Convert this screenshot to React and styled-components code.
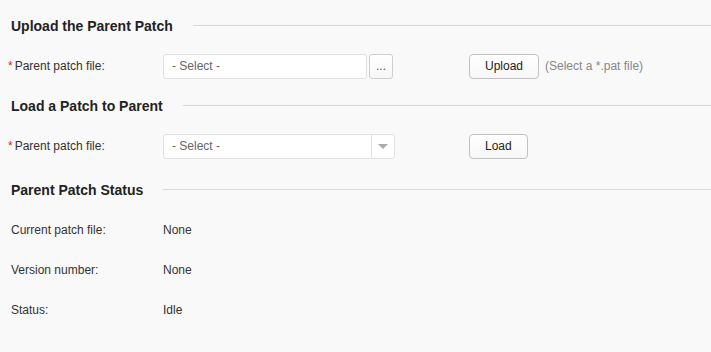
import React from "react";
import styled, { createGlobalStyle } from "styled-components";

const GlobalStyle = createGlobalStyle`
  html, body {
    margin: 0;
    padding: 0;
    background: #f9f9f9;
    font-family: "Liberation Sans", Arial, sans-serif;
    font-size: 12px;
    color: #333;
  }
`;

const Page = styled.div`
  padding-top: 5px;
  width: 711px;
  height: 352px;
  box-sizing: border-box;
  overflow: hidden;
`;

const Heading = styled.div`
  display: flex;
  align-items: center;
  height: 40px;
  padding-left: 11px;
  margin-top: ${p => p.$offset || 0}px;

  h2 {
    margin: 0;
    padding-top: 2px;
    font-size: 14px;
    font-weight: bold;
    color: #222;
    white-space: nowrap;
  }

  &::after {
    content: "";
    flex: 1;
    height: 1px;
    background: #d9d9d9;
    margin-left: 20px;
  }
`;

const Row = styled.div`
  display: grid;
  grid-template-columns: 163px 306px auto;
  align-items: center;
  height: 40px;
  box-sizing: border-box;
  padding-top: 2px;
`;

const Label = styled.div`
  padding-left: ${p => (p.$required ? 8 : 11)}px;
  color: #333;

  .req {
    color: #d9230f;
    margin-right: 2px;
  }
`;

const Field = styled.div`
  display: flex;
  align-items: center;
  gap: 2px;
`;

const Box = styled.div`
  box-sizing: border-box;
  display: flex;
  align-items: center;
  width: ${p => p.$width}px;
  height: 25px;
  background: #fff;
  border: 1px solid #e2e2e2;
  border-radius: 3px;
  color: #666;
`;

const BoxText = styled.span`
  flex: 1;
  padding-left: 8px;
`;

const Arrow = styled.span`
  width: 22px;
  height: 100%;
  border-left: 1px solid #e2e2e2;
  display: flex;
  align-items: center;
  justify-content: center;

  &::before {
    content: "";
    border-left: 5px solid transparent;
    border-right: 5px solid transparent;
    border-top: 5px solid #aaa;
  }
`;

const Button = styled.button`
  box-sizing: border-box;
  height: 25px;
  padding: 0 ${p => p.$pad || 15}px;
  background: linear-gradient(#fff, #f7f7f7);
  border: 1px solid #c2c2c2;
  border-radius: 4px;
  font-family: inherit;
  font-size: 12px;
  color: #222;
  cursor: pointer;
`;

const Dots = styled(Button)`
  width: 24px;
  padding: 0;
  border-color: #cfcfcf;
  border-radius: 3px;
  color: #555;
`;

const Actions = styled.div`
  display: flex;
  align-items: center;
  gap: 6px;
`;

const Hint = styled.span`
  color: #888;
`;

const Value = styled.div`
  color: #333;
`;

const StatusRow = ({ label, value }) => (
  <Row>
    <Label>{label}</Label>
    <Value>{value}</Value>
  </Row>
);

export default function App() {
  return (
    <Page>
      <GlobalStyle />
      <Heading>
        <h2>Upload the Parent Patch</h2>
      </Heading>
      <Row>
        <Label $required>
          <span className="req">*</span>Parent patch file:
        </Label>
        <Field>
          <Box $width={204}>
            <BoxText>- Select -</BoxText>
          </Box>
          <Dots>...</Dots>
        </Field>
        <Actions>
          <Button>Upload</Button>
          <Hint>(Select a *.pat file)</Hint>
        </Actions>
      </Row>

      <Heading>
        <h2>Load a Patch to Parent</h2>
      </Heading>
      <Row>
        <Label $required>
          <span className="req">*</span>Parent patch file:
        </Label>
        <Field>
          <Box $width={232}>
            <BoxText>- Select -</BoxText>
            <Arrow />
          </Box>
        </Field>
        <Actions>
          <Button>Load</Button>
        </Actions>
      </Row>

      <Heading $offset={4}>
        <h2>Parent Patch Status</h2>
      </Heading>
      <StatusRow label="Current patch file:" value="None" />
      <StatusRow label="Version number:" value="None" />
      <StatusRow label="Status:" value="Idle" />
    </Page>
  );
}
